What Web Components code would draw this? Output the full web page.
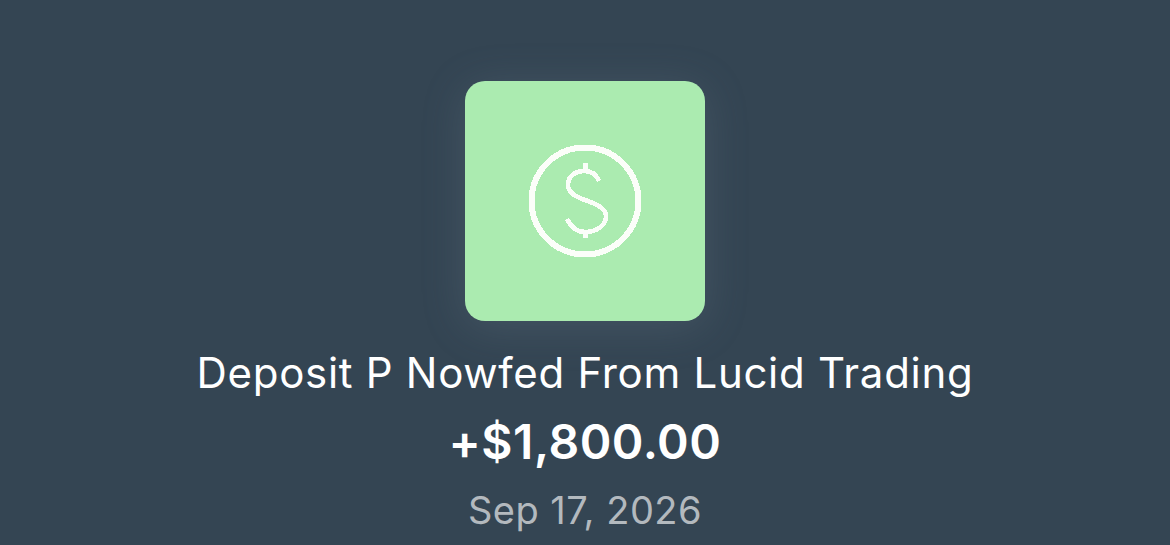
<!DOCTYPE html>
<html>
<head>
<meta charset="utf-8">
<style>
  html, body { margin: 0; height: 100%; background: #344553; overflow: hidden; }
</style>
</head>
<body>
<deposit-detail>
  <span slot="title">Deposit P Nowfed From Lucid Trading</span>
  <span slot="amount">+$1,800.00</span>
  <span slot="date">Sep 17, 2026</span>
</deposit-detail>

<script>
class TxIcon extends HTMLElement {
  constructor() {
    super()
    this.shadow = this.attachShadow({ mode: 'open' })
  }

  connectedCallback() {
    this.shadow.innerHTML = `
      <style>
        :host {
          display: flex;
          align-items: center;
          justify-content: center;
          width: 240px;
          height: 240px;
          border-radius: 20px;
          background: #abebb0;
          box-shadow: 0 6px 44px rgba(120, 140, 155, 0.24);
        }
        svg { width: 116px; height: 116px; display: block; shape-rendering: crispEdges; }
      </style>
      <svg viewBox="0 0 116 116" fill="none" stroke="#fbfef9">
        <circle cx="58" cy="58" r="53.5" stroke-width="6"/>
        <path stroke-width="4.6" d="M72 38C69 31 64 28 58 28C48 28 41 33 41 42C41 50 49 54 58 57C69 61 79 65 79 73C79 83 69 89 58 89C50 89 44 84 40 76"/>
        <path stroke-width="5" d="M58 20V28M58 89V95"/>
      </svg>
    `
  }
}

class DepositDetail extends HTMLElement {
  constructor() {
    super()
    this.shadow = this.attachShadow({ mode: 'open' })
  }

  connectedCallback() {
    this.shadow.innerHTML = `
      <style>
        :host {
          display: flex;
          flex-direction: column;
          align-items: center;
          padding-top: 81px;
          font-family: Inter, "Liberation Sans", sans-serif;
          color: #fff;
        }
        .title { margin-top: 25px; font-size: 42px; line-height: 54px; letter-spacing: 0.7px; white-space: nowrap; }
        .amount { margin-top: 14px; font-size: 48px; line-height: 56px; font-weight: 600; letter-spacing: 0.5px; }
        .date { margin-top: 15px; font-size: 38px; line-height: 50px; color: #b3b9be; letter-spacing: 0.5px; }
      </style>
      <tx-icon></tx-icon>
      <div class="title"><slot name="title"></slot></div>
      <div class="amount"><slot name="amount"></slot></div>
      <div class="date"><slot name="date"></slot></div>
    `
  }
}

customElements.define('tx-icon', TxIcon)
customElements.define('deposit-detail', DepositDetail)
</script>
</body>
</html>
